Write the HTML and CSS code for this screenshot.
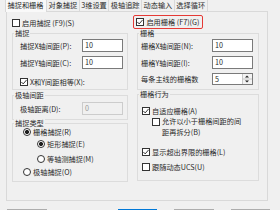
FILE: index.html
```html
<!DOCTYPE html>
<html lang="zh-CN">
<head>
<meta charset="utf-8">
<title>草图设置</title>
<link rel="stylesheet" href="styles.css">
</head>
<body>
<div class="tabs">
  <div class="tab active">捕捉和栅格</div>
  <div class="tab">对象捕捉</div>
  <div class="tab">3维设置</div>
  <div class="tab">极轴追踪</div>
  <div class="tab">动态输入</div>
  <div class="tab">选择循环</div>
</div>
<div class="page">
  <div class="cols">
    <div class="col">
      <div class="top-row top-left">
        <span class="cb"></span><span class="lbl">启用捕捉 (F9)(S)</span>
      </div>
      <div class="group g1L">
        <div class="gtitle tl">捕捉</div>
        <div class="field f-first"><span>捕捉X轴间距(P):</span><span class="input">10</span></div>
        <div class="field f-next"><span>捕捉Y轴间距(C):</span><span class="input">10</span></div>
        <div class="check c-xy"><span class="cb"><svg viewBox="0 0 6 6" width="6" height="6"><path d="M0.4 3 L2.2 4.9 L5.6 0.9" /></svg></span><span class="lbl">X和Y间距相等(X):</span></div>
      </div>
      <div class="group g2L">
        <div class="gtitle tl">极轴间距</div>
        <div class="field f-polar"><span>极轴距离(D):</span><span class="input disabled">0</span></div>
      </div>
      <div class="group g3L">
        <div class="gtitle tl">捕捉类型</div>
        <div class="radio r1"><span class="rb on"></span><span class="lbl">栅格捕捉(R)</span></div>
        <div class="radio r2"><span class="rb on"></span><span class="lbl">矩形捕捉(E)</span></div>
        <div class="radio r3"><span class="rb"></span><span class="lbl">等轴测捕捉(M)</span></div>
        <div class="radio r4"><span class="rb"></span><span class="lbl">极轴捕捉(O)</span></div>
      </div>
    </div>
    <div class="col">
      <div class="top-row">
        <div class="redbox"><span class="cb"><svg viewBox="0 0 6 6" width="6" height="6"><path d="M0.4 3 L2.2 4.9 L5.6 0.9" /></svg></span><span class="lbl">启用栅格 (F7)(G)</span></div>
      </div>
      <div class="group g1R">
        <div class="gtitle tr">栅格</div>
        <div class="field f-first"><span>栅格X轴间距(N):</span><span class="input">10</span></div>
        <div class="field f-next"><span>栅格Y轴间距(I):</span><span class="input">10</span></div>
        <div class="field f-spin"><span>每条主线的栅格数</span>
          <span class="input spin"><span class="spin-val">5</span>
            <svg class="spin-btn" viewBox="0 0 10 10" width="10" height="10"><rect x="0" y="0" width="10" height="10" fill="#f3f3f3"/><path d="M0.5 0 V10 M0 5 H10" stroke="#c8c8c8" stroke-width="1" fill="none"/><path d="M5 1.6 L3 3.6 H7 Z M3 6.4 H7 L5 8.4 Z" fill="#222"/></svg>
          </span>
        </div>
      </div>
      <div class="group g2R">
        <div class="gtitle tr">栅格行为</div>
        <div class="check c1"><span class="cb"><svg viewBox="0 0 6 6" width="6" height="6"><path d="M0.4 3 L2.2 4.9 L5.6 0.9" /></svg></span><span class="lbl">自适应栅格(A)</span></div>
        <div class="check c2"><span class="cb"></span><span class="lbl">允许以小于栅格间距的间<br>距再拆分(B)</span></div>
        <div class="check c3"><span class="cb"><svg viewBox="0 0 6 6" width="6" height="6"><path d="M0.4 3 L2.2 4.9 L5.6 0.9" /></svg></span><span class="lbl">显示超出界限的栅格(L)</span></div>
        <div class="check c4"><span class="cb"></span><span class="lbl">跟随动态UCS(U)</span></div>
      </div>
    </div>
  </div>
</div>
<div class="buttons">
  <div class="btn b1"></div>
  <div class="btn b2 default"></div>
  <div class="btn b3"></div>
  <div class="btn b4"></div>
</div>
</body>
</html>
```

FILE: styles.css
```css
* { box-sizing: border-box; }

body {
  margin: 0;
  width: 280px;
  height: 210px;
  overflow: hidden;
  background: #f0f0f0;
  font-family: "Noto Sans CJK SC", "Noto Sans", sans-serif;
  font-size: 7.2px;
  line-height: 8px;
  color: #2a2a2a;
}

/* tabs */
.tabs {
  position: relative;
  z-index: 1;
  display: flex;
  height: 11px;
  padding-left: 5px;
}
.tab {
  height: 11px;
  padding: 0 1.5px;
  line-height: 11px;
  white-space: nowrap;
  border-right: 1px solid #d9d9d9;
  background: #f0f0f0;
}
.tab:first-child { border-left: 1px solid #d9d9d9; }
.tab.active {
  height: 12px;
  background: #f9f9f9;
  padding: 0 2.5px 0 1.5px;
}

/* page */
.page {
  margin-left: 6px;
  width: 262px;
  height: 190px;
  border: 1px solid #d9d9d9;
  background: #f0f0f0;
  padding: 3px 0 0 5px;
}
.cols {
  display: grid;
  grid-template-columns: 116px 122px;
  column-gap: 9px;
}

.top-row {
  height: 14px;
  display: flex;
  align-items: center;
}
.top-left { padding-top: 2px; }
.redbox {
  margin-left: -4px;
  width: 70px;
  height: 14px;
  border: 1.6px solid #e53935;
  border-radius: 2px;
  padding-left: 2.4px;
  display: flex;
  align-items: center;
}

/* checkbox / radio */
.cb {
  flex: none;
  width: 8px;
  height: 8px;
  border: 1px solid #333;
  background: #fff;
  display: inline-flex;
  align-items: center;
  justify-content: center;
  margin-right: 2px;
}
.cb svg path { stroke: #222; stroke-width: 0.9; fill: none; }
.rb {
  flex: none;
  width: 8px;
  height: 8px;
  border: 1px solid #333;
  border-radius: 50%;
  background: #fff;
  margin-right: 2px;
}
.rb.on { background: radial-gradient(circle, #1e1e1e 0 1.8px, #fff 2.3px); }
.lbl { white-space: nowrap; }

/* groups */
.group {
  border: 1px solid #dcdcdc;
}
.gtitle {
  margin-top: -5px;
  padding: 0 1px;
  width: max-content;
  line-height: 8px;
  background: #f0f0f0;
}
.gtitle.tl { margin-left: -6px; }
.gtitle.tr { margin-left: -2px; }

.field {
  display: flex;
  align-items: center;
  justify-content: space-between;
  height: 13px;
}
.f-first { margin-top: 2px; }
.f-next { margin-top: 4px; }
.f-polar { margin-top: 3px; }
.f-spin { margin-top: 4px; height: 12px; }

.input {
  width: 41px;
  height: 13px;
  border: 1px solid #7a7a7a;
  background: #fff;
  padding-left: 2px;
  line-height: 11px;
}
.input.disabled {
  border-color: #cccccc;
  background: #f0f0f0;
  color: #9a9a9a;
}
.input.spin {
  height: 12px;
  display: flex;
  justify-content: space-between;
  padding-right: 0;
  line-height: 10px;
}
.spin-btn { display: block; }

.check {
  display: flex;
  align-items: center;
  height: 13px;
}
.radio {
  display: flex;
  align-items: center;
  height: 12px;
}

/* left column groups */
.g1L { margin-top: 4px; padding: 0 4px 1px 7px; }
.c-xy { margin-top: 6px; }
.g2L { margin-top: 5px; padding: 0 4px 4px 7px; }
.g3L { margin-top: 3px; padding: 0 0 3px 0; }
.g3L .gtitle.tl { margin-left: 1px; margin-bottom: -1px; }
.r1 { margin-left: 10px; }
.r2 { margin-left: 24px; }
.r3 { margin-left: 24px; margin-top: 3px; }
.r4 { margin-left: 10px; margin-top: 1px; }

/* right column groups */
.g1R { margin-top: 4px; padding: 0 5px 4px 3px; }
.g2R { margin-top: 4px; padding: 0 0 7.2px 0; }
.g2R .gtitle.tr { margin-left: 1px; }
.c1 { margin-top: 6px; margin-left: 4px; }
.c2 {
  margin-top: -1px;
  margin-left: 14px;
  height: auto;
  align-items: flex-start;
  line-height: 10.5px;
}
.c2 .cb { margin-top: 1.5px; }
.c3 { margin-top: 8px; margin-left: 4px; }
.c4 { margin-top: 2px; margin-left: 4px; }

/* bottom buttons (only their top edge is inside the frame) */
.buttons {
  display: flex;
  margin-top: 8px;
  height: 1px;
  overflow: hidden;
}
.btn {
  flex: none;
  width: 40px;
  height: 14px;
  background: #e1e1e1;
  border: 1px solid #adadad;
}
.btn.default { border-color: #0078d7; width: 39px; }
.b1 { margin-left: 7px; }
.b2 { margin-left: 71px; }
.b3 { margin-left: 17px; }
.b4 { margin-left: 17px; width: 39px; }
```
